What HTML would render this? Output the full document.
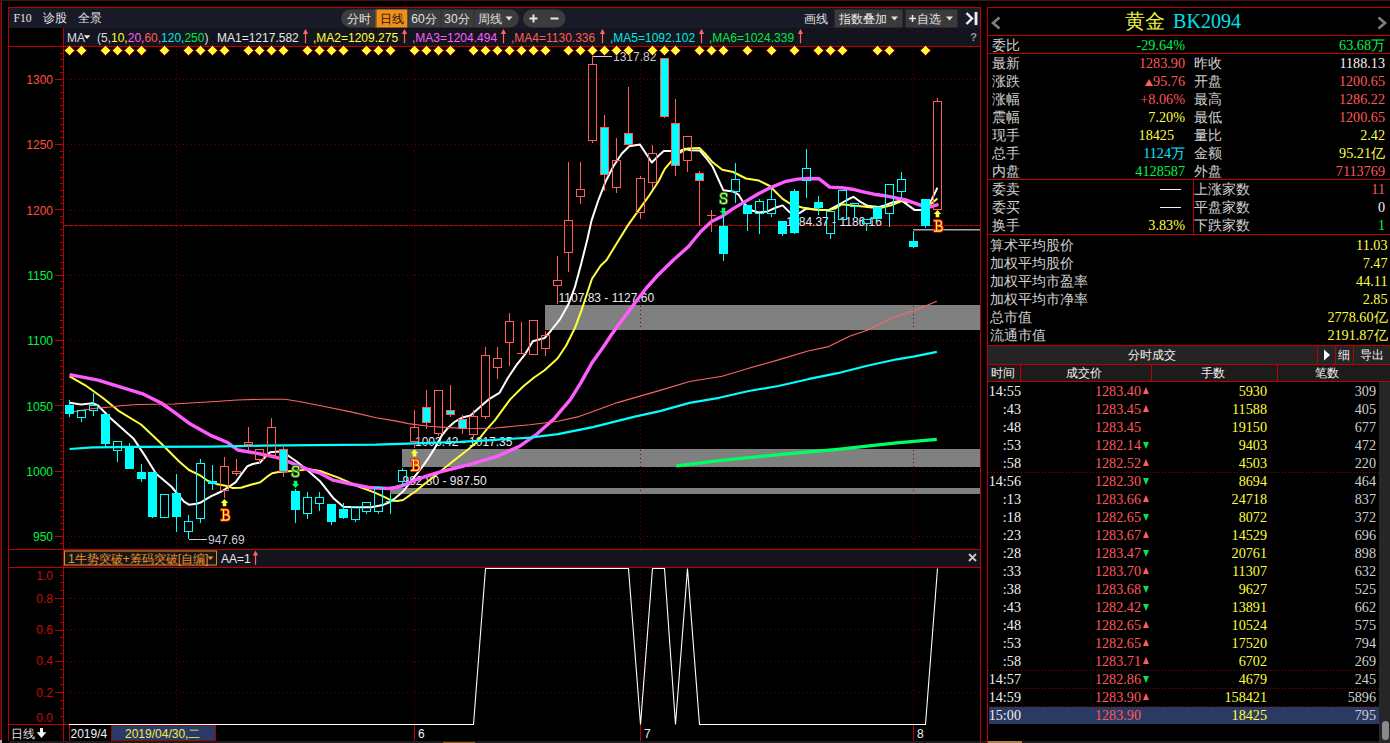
<!DOCTYPE html>
<html><head><meta charset="utf-8"><title>chart</title><style>
html,body{margin:0;padding:0;background:#000;}
body{width:1390px;height:743px;overflow:hidden;position:relative;font-family:"Liberation Sans",sans-serif;}
#rp{position:absolute;left:0;top:0;width:1390px;height:743px;}
#rp .l{position:absolute;background:#c00000;display:block}
.ttl{position:absolute;left:988px;width:402px;height:27px;line-height:27px;text-align:center;font-family:"Liberation Serif",serif;font-size:20px;white-space:pre}
.r{position:absolute;left:0;width:1390px;height:18px;line-height:18px;white-space:nowrap}
.r .k{position:absolute;top:0;font-size:14px;color:#d0d0d0;font-family:"Liberation Sans",sans-serif}
.r .v{position:absolute;top:0;font-family:"Liberation Serif",serif;font-size:14.2px}
.cj{font-family:"Liberation Sans",sans-serif;font-size:14px}
.tu{display:inline-block;width:0;height:0;border-left:3.8px solid transparent;border-right:3.8px solid transparent;border-bottom:7.5px solid #ff5c5c;margin-right:0.5px}
.td{display:inline-block;width:0;height:0;border-left:3.8px solid transparent;border-right:3.8px solid transparent;border-top:7.5px solid #00e64c}
.ds{display:inline-block;width:21px;height:1.5px;background:#f0f0f0;vertical-align:middle;margin-right:4px;margin-bottom:2px}
.hd{position:absolute;left:988px;width:402px;background:#242424}
.ht{position:absolute;font-size:12px;line-height:16px;color:#f0f0f0;white-space:nowrap}
</style></head><body>
<svg id="chart" width="1390" height="743" viewBox="0 0 1390 743" style="position:absolute;left:0;top:0" font-family="Liberation Sans, sans-serif">
<rect x="0" y="0" width="1390" height="1" fill="#481212"/>
<rect x="0" y="2" width="1" height="741" fill="#1a2222"/>
<rect x="1" y="1" width="1" height="742" fill="#c00000"/>
<rect x="9" y="8" width="971" height="20" fill="#181a28"/>
<rect x="64" y="28" width="916" height="18" fill="#14151c"/>
<rect x="64" y="550" width="916" height="17" fill="#14151c"/>
<g shape-rendering="crispEdges">
<rect x="545" y="305" width="435" height="25" fill="#808080"/>
<rect x="402" y="449" width="578" height="18" fill="#808080"/>
<rect x="390" y="488" width="590" height="6" fill="#808080"/>
<rect x="913" y="229" width="67" height="1" fill="#a8a8a8"/><rect x="913" y="230" width="67" height="1" fill="#585858"/>
<line x1="67" y1="79.5" x2="980" y2="79.5" stroke="#700000" stroke-width="1" stroke-dasharray="1 3"/>
<line x1="67" y1="144.5" x2="980" y2="144.5" stroke="#700000" stroke-width="1" stroke-dasharray="1 3"/>
<line x1="67" y1="210.5" x2="980" y2="210.5" stroke="#700000" stroke-width="1" stroke-dasharray="1 3"/>
<line x1="67" y1="275.5" x2="980" y2="275.5" stroke="#700000" stroke-width="1" stroke-dasharray="1 3"/>
<line x1="67" y1="340.5" x2="980" y2="340.5" stroke="#700000" stroke-width="1" stroke-dasharray="1 3"/>
<line x1="67" y1="406.5" x2="980" y2="406.5" stroke="#700000" stroke-width="1" stroke-dasharray="1 3"/>
<line x1="67" y1="471.5" x2="980" y2="471.5" stroke="#700000" stroke-width="1" stroke-dasharray="1 3"/>
<line x1="67" y1="536.5" x2="980" y2="536.5" stroke="#700000" stroke-width="1" stroke-dasharray="1 3"/>
<line x1="67" y1="598.5" x2="980" y2="598.5" stroke="#700000" stroke-width="1" stroke-dasharray="1 3"/>
<line x1="67" y1="629.5" x2="980" y2="629.5" stroke="#700000" stroke-width="1" stroke-dasharray="1 3"/>
<line x1="67" y1="661.5" x2="980" y2="661.5" stroke="#700000" stroke-width="1" stroke-dasharray="1 3"/>
<line x1="67" y1="692.5" x2="980" y2="692.5" stroke="#700000" stroke-width="1" stroke-dasharray="1 3"/>
<line x1="69.5" y1="46" x2="69.5" y2="549" stroke="#700000" stroke-width="1" stroke-dasharray="1 3" stroke-dashoffset="0"/>
<line x1="69.5" y1="570" x2="69.5" y2="724" stroke="#700000" stroke-width="1" stroke-dasharray="1 3"/>
<line x1="176.5" y1="46" x2="176.5" y2="549" stroke="#700000" stroke-width="1" stroke-dasharray="1 3" stroke-dashoffset="0"/>
<line x1="176.5" y1="570" x2="176.5" y2="724" stroke="#700000" stroke-width="1" stroke-dasharray="1 3"/>
<line x1="414.5" y1="46" x2="414.5" y2="549" stroke="#700000" stroke-width="1" stroke-dasharray="1 3" stroke-dashoffset="0"/>
<line x1="414.5" y1="570" x2="414.5" y2="724" stroke="#700000" stroke-width="1" stroke-dasharray="1 3"/>
<line x1="640.5" y1="46" x2="640.5" y2="549" stroke="#700000" stroke-width="1" stroke-dasharray="1 3" stroke-dashoffset="0"/>
<line x1="640.5" y1="570" x2="640.5" y2="724" stroke="#700000" stroke-width="1" stroke-dasharray="1 3"/>
<line x1="913.5" y1="46" x2="913.5" y2="549" stroke="#700000" stroke-width="1" stroke-dasharray="1 3" stroke-dashoffset="0"/>
<line x1="913.5" y1="570" x2="913.5" y2="724" stroke="#700000" stroke-width="1" stroke-dasharray="1 3"/>
<line x1="64" y1="225.5" x2="980" y2="225.5" stroke="#d00000" stroke-width="1" stroke-dasharray="4 1"/>
<rect x="8" y="7" width="973" height="1" fill="#c00000"/>
<rect x="8" y="7" width="1" height="734" fill="#c00000"/>
<rect x="980" y="7" width="1" height="736" fill="#c00000"/>
<rect x="8" y="46" width="973" height="1" fill="#c00000"/>
<rect x="8" y="549" width="973" height="1" fill="#c00000"/>
<rect x="8" y="567" width="973" height="1" fill="#c00000"/>
<rect x="8" y="724" width="62" height="1" fill="#c00000"/>
<rect x="63" y="28" width="1" height="713" fill="#c00000"/>
<rect x="60" y="53" width="3" height="1" fill="#c00000"/>
<rect x="60" y="59" width="3" height="1" fill="#c00000"/>
<rect x="60" y="66" width="3" height="1" fill="#c00000"/>
<rect x="60" y="72" width="3" height="1" fill="#c00000"/>
<rect x="55" y="79" width="8" height="1" fill="#c00000"/>
<rect x="60" y="85" width="3" height="1" fill="#c00000"/>
<rect x="60" y="92" width="3" height="1" fill="#c00000"/>
<rect x="60" y="98" width="3" height="1" fill="#c00000"/>
<rect x="60" y="105" width="3" height="1" fill="#c00000"/>
<rect x="60" y="111" width="3" height="1" fill="#c00000"/>
<rect x="60" y="118" width="3" height="1" fill="#c00000"/>
<rect x="60" y="124" width="3" height="1" fill="#c00000"/>
<rect x="60" y="131" width="3" height="1" fill="#c00000"/>
<rect x="60" y="137" width="3" height="1" fill="#c00000"/>
<rect x="55" y="144" width="8" height="1" fill="#c00000"/>
<rect x="60" y="151" width="3" height="1" fill="#c00000"/>
<rect x="60" y="157" width="3" height="1" fill="#c00000"/>
<rect x="60" y="164" width="3" height="1" fill="#c00000"/>
<rect x="60" y="170" width="3" height="1" fill="#c00000"/>
<rect x="60" y="177" width="3" height="1" fill="#c00000"/>
<rect x="60" y="183" width="3" height="1" fill="#c00000"/>
<rect x="60" y="190" width="3" height="1" fill="#c00000"/>
<rect x="60" y="196" width="3" height="1" fill="#c00000"/>
<rect x="60" y="203" width="3" height="1" fill="#c00000"/>
<rect x="55" y="209" width="8" height="1" fill="#c00000"/>
<rect x="60" y="216" width="3" height="1" fill="#c00000"/>
<rect x="60" y="222" width="3" height="1" fill="#c00000"/>
<rect x="60" y="229" width="3" height="1" fill="#c00000"/>
<rect x="60" y="235" width="3" height="1" fill="#c00000"/>
<rect x="60" y="242" width="3" height="1" fill="#c00000"/>
<rect x="60" y="249" width="3" height="1" fill="#c00000"/>
<rect x="60" y="255" width="3" height="1" fill="#c00000"/>
<rect x="60" y="262" width="3" height="1" fill="#c00000"/>
<rect x="60" y="268" width="3" height="1" fill="#c00000"/>
<rect x="55" y="275" width="8" height="1" fill="#c00000"/>
<rect x="60" y="281" width="3" height="1" fill="#c00000"/>
<rect x="60" y="288" width="3" height="1" fill="#c00000"/>
<rect x="60" y="294" width="3" height="1" fill="#c00000"/>
<rect x="60" y="301" width="3" height="1" fill="#c00000"/>
<rect x="60" y="307" width="3" height="1" fill="#c00000"/>
<rect x="60" y="314" width="3" height="1" fill="#c00000"/>
<rect x="60" y="320" width="3" height="1" fill="#c00000"/>
<rect x="60" y="327" width="3" height="1" fill="#c00000"/>
<rect x="60" y="333" width="3" height="1" fill="#c00000"/>
<rect x="55" y="340" width="8" height="1" fill="#c00000"/>
<rect x="60" y="347" width="3" height="1" fill="#c00000"/>
<rect x="60" y="353" width="3" height="1" fill="#c00000"/>
<rect x="60" y="360" width="3" height="1" fill="#c00000"/>
<rect x="60" y="366" width="3" height="1" fill="#c00000"/>
<rect x="60" y="373" width="3" height="1" fill="#c00000"/>
<rect x="60" y="379" width="3" height="1" fill="#c00000"/>
<rect x="60" y="386" width="3" height="1" fill="#c00000"/>
<rect x="60" y="392" width="3" height="1" fill="#c00000"/>
<rect x="60" y="399" width="3" height="1" fill="#c00000"/>
<rect x="55" y="405" width="8" height="1" fill="#c00000"/>
<rect x="60" y="412" width="3" height="1" fill="#c00000"/>
<rect x="60" y="418" width="3" height="1" fill="#c00000"/>
<rect x="60" y="425" width="3" height="1" fill="#c00000"/>
<rect x="60" y="431" width="3" height="1" fill="#c00000"/>
<rect x="60" y="438" width="3" height="1" fill="#c00000"/>
<rect x="60" y="445" width="3" height="1" fill="#c00000"/>
<rect x="60" y="451" width="3" height="1" fill="#c00000"/>
<rect x="60" y="458" width="3" height="1" fill="#c00000"/>
<rect x="60" y="464" width="3" height="1" fill="#c00000"/>
<rect x="55" y="471" width="8" height="1" fill="#c00000"/>
<rect x="60" y="477" width="3" height="1" fill="#c00000"/>
<rect x="60" y="484" width="3" height="1" fill="#c00000"/>
<rect x="60" y="490" width="3" height="1" fill="#c00000"/>
<rect x="60" y="497" width="3" height="1" fill="#c00000"/>
<rect x="60" y="503" width="3" height="1" fill="#c00000"/>
<rect x="60" y="510" width="3" height="1" fill="#c00000"/>
<rect x="60" y="516" width="3" height="1" fill="#c00000"/>
<rect x="60" y="523" width="3" height="1" fill="#c00000"/>
<rect x="60" y="529" width="3" height="1" fill="#c00000"/>
<rect x="55" y="536" width="8" height="1" fill="#c00000"/>
<rect x="60" y="543" width="3" height="1" fill="#c00000"/>
<rect x="60" y="716" width="3" height="1" fill="#c00000"/>
<rect x="60" y="708" width="3" height="1" fill="#c00000"/>
<rect x="60" y="700" width="3" height="1" fill="#c00000"/>
<rect x="55" y="692" width="8" height="1" fill="#c00000"/>
<rect x="60" y="684" width="3" height="1" fill="#c00000"/>
<rect x="60" y="677" width="3" height="1" fill="#c00000"/>
<rect x="60" y="669" width="3" height="1" fill="#c00000"/>
<rect x="55" y="661" width="8" height="1" fill="#c00000"/>
<rect x="60" y="653" width="3" height="1" fill="#c00000"/>
<rect x="60" y="645" width="3" height="1" fill="#c00000"/>
<rect x="60" y="637" width="3" height="1" fill="#c00000"/>
<rect x="55" y="630" width="8" height="1" fill="#c00000"/>
<rect x="60" y="622" width="3" height="1" fill="#c00000"/>
<rect x="60" y="614" width="3" height="1" fill="#c00000"/>
<rect x="60" y="606" width="3" height="1" fill="#c00000"/>
<rect x="55" y="598" width="8" height="1" fill="#c00000"/>
<rect x="60" y="590" width="3" height="1" fill="#c00000"/>
<rect x="60" y="582" width="3" height="1" fill="#c00000"/>
<rect x="60" y="575" width="3" height="1" fill="#c00000"/>
<rect x="69" y="724" width="1" height="17" fill="#c00000"/>
<rect x="414" y="724" width="1" height="17" fill="#c00000"/>
<rect x="640" y="724" width="1" height="17" fill="#c00000"/>
<rect x="913" y="724" width="1" height="17" fill="#c00000"/>
</g>
<text x="53" y="83.8" font-size="12" fill="#ff5040" text-anchor="end">1300</text>
<text x="53" y="148.8" font-size="12" fill="#ff5040" text-anchor="end">1250</text>
<text x="53" y="214.8" font-size="12" fill="#ff5040" text-anchor="end">1200</text>
<text x="53" y="279.8" font-size="12" fill="#00f448" text-anchor="end">1150</text>
<text x="53" y="344.8" font-size="12" fill="#00f448" text-anchor="end">1100</text>
<text x="53" y="410.8" font-size="12" fill="#00f448" text-anchor="end">1050</text>
<text x="53" y="475.8" font-size="12" fill="#00f448" text-anchor="end">1000</text>
<text x="53" y="540.8" font-size="12" fill="#00f448" text-anchor="end">950</text>
<text x="53" y="579.8" font-size="12" fill="#c01010" text-anchor="end">1.0</text>
<text x="53" y="602.8" font-size="12" fill="#c01010" text-anchor="end">0.8</text>
<text x="53" y="633.8" font-size="12" fill="#c01010" text-anchor="end">0.6</text>
<text x="53" y="665.3" font-size="12" fill="#c01010" text-anchor="end">0.4</text>
<text x="53" y="696.8" font-size="12" fill="#c01010" text-anchor="end">0.2</text>
<text x="53" y="721.8" font-size="12" fill="#c01010" text-anchor="end">0.0</text>
<text x="558.5" y="302" font-size="12" fill="#e8e8f4">1107.83 - 1127.60</text>
<text x="415" y="445.8" font-size="12" fill="#e8e8f4">1003.42 - 1017.35</text>
<text x="402.5" y="484.8" font-size="12" fill="#e8e8f4">982.80 - 987.50</text>
<text x="786.3" y="225.8" font-size="12" fill="#e8e8f4">1184.37 - 1186.16</text>
<polyline points="69.6,402.8 81.0,404.5 92.9,403.2 98.0,405.5 110.6,418.2 133.4,438.4 146.0,457.4 156.1,473.8 171.3,486.5 184.0,501.7 189.0,504.7 196.6,503.7 200.0,502.8 210.8,496.3 221.5,491.5 229.1,486.6 235.5,482.3 240.9,474.8 247.4,466.2 252.8,464.0 260.3,462.4 264.6,457.5 270.0,452.2 278.6,451.6 286.2,454.3 297.0,461.8 307.7,470.5 320.0,481.2 333.2,497.9 343.3,506.7 356.0,507.2 371.2,507.2 383.8,504.7 390.0,502.0 395.0,498.3 403.1,491.5 412.5,479.4 421.9,467.3 428.6,457.9 435.4,447.1 442.1,435.0 448.8,426.9 454.2,422.2 462.3,417.5 470.4,415.5 475.8,410.8 482.5,404.7 488.6,399.4 499.4,392.9 508.0,377.8 516.6,364.9 525.2,354.1 532.8,341.2 544.6,338.0 551.1,330.5 559.7,319.7 568.3,304.6 574.8,287.4 581.2,263.7 587.2,240.0 591.5,220.6 598.0,201.2 605.5,181.8 613.1,166.8 621.7,153.8 629.2,146.3 640.0,144.6 645.4,152.8 651.8,162.5 658.3,156.0 663.7,151.0 679.8,151.0 685.2,148.8 690.0,150.3 699.7,150.5 706.2,158.0 712.6,166.6 718.0,178.5 723.4,190.3 733.1,191.4 738.5,194.6 743.8,203.2 752.5,210.8 758.9,212.5 767.5,211.4 776.2,207.5 782.6,205.4 789.1,211.8 793.4,214.0 799.8,212.9 806.3,208.6 819.2,210.1 828.6,210.1 839.4,204.3 846.9,200.0 853.4,196.8 860.9,202.2 867.4,205.8 878.2,207.1 884.6,205.4 893.2,202.2 901.8,200.6 908.3,205.4 914.8,210.1 925.5,210.1 932.0,198.9 937.4,187.7" fill="none" stroke="#ffffff" stroke-width="2" stroke-linejoin="round" />
<polyline points="69.6,376.4 85.3,385.3 103.0,398.0 118.2,410.6 141.0,424.5 161.2,443.5 178.9,461.2 189.0,470.0 200.0,475.3 207.5,480.7 216.2,483.9 226.9,486.1 232.3,487.9 240.9,487.7 251.7,484.5 260.3,482.3 266.8,476.9 272.2,473.2 278.6,472.1 286.2,471.5 291.6,471.0 302.3,469.9 307.7,468.9 320.0,471.0 338.3,477.6 358.5,486.5 373.7,492.1 386.3,497.9 391.4,500.6 397.0,501.0 403.1,500.0 415.2,491.5 428.6,480.8 442.1,470.0 455.6,459.2 467.7,449.8 475.8,443.1 486.5,429.6 495.0,420.2 510.2,399.4 523.1,386.5 533.8,377.8 544.6,370.3 557.5,358.5 566.2,345.5 574.8,328.3 581.2,311.1 585.5,298.2 592.0,278.8 600.6,265.8 606.6,260.0 617.4,242.2 628.2,224.9 638.9,209.8 649.7,194.8 658.3,181.8 664.8,168.9 671.2,161.4 679.8,152.8 687.4,148.5 699.7,148.1 706.2,154.8 712.6,162.3 722.3,169.8 733.1,172.0 746.0,178.5 758.9,180.6 769.7,186.0 776.2,192.5 782.6,198.9 791.2,204.3 802.0,207.5 812.8,209.3 823.5,210.1 828.6,210.1 835.1,208.6 841.5,204.3 852.3,205.4 863.1,206.5 871.7,207.5 882.5,207.5 891.1,205.4 901.8,201.1 910.5,202.2 919.1,204.3 925.5,205.4 932.0,203.2 937.4,198.5" fill="none" stroke="#ffff3c" stroke-width="2" stroke-linejoin="round" />
<polyline points="69.6,374.7 98.0,380.2 123.2,387.8 143.5,394.2 161.2,403.0 173.8,411.9 189.0,423.2 211.8,435.9 227.0,442.2 237.7,450.0 256.0,453.2 275.4,457.0 286.2,460.8 297.0,465.1 307.7,469.4 320.0,473.2 333.2,480.2 350.9,484.0 371.2,487.8 388.9,488.5 395.0,487.5 403.0,485.5 415.2,480.1 428.6,475.4 442.1,471.3 455.6,468.0 469.0,464.6 482.5,460.6 495.0,457.2 519.4,446.4 536.9,434.1 554.4,418.4 570.5,399.4 581.2,382.1 592.0,362.8 602.8,347.7 611.4,334.8 620.0,322.9 634.8,303.0 646.0,288.5 657.6,275.5 673.4,260.0 688.5,246.5 700.8,231.5 711.5,221.5 722.3,216.2 733.1,208.6 746.0,201.1 758.9,193.5 771.8,187.1 784.8,181.7 797.7,179.1 808.5,178.5 819.2,178.8 829.7,187.1 841.5,187.7 852.3,189.2 863.1,191.8 873.8,194.2 884.6,195.7 895.4,197.8 906.2,200.0 914.8,203.2 925.5,207.1 932.0,206.5 938.5,204.3" fill="none" stroke="#ff5cff" stroke-width="3.4" stroke-linejoin="round" />
<polyline points="74.0,411.6 93.5,408.5 110.0,407.0 123.0,405.5 138.0,404.5 173.8,404.0 211.8,401.7 237.1,400.0 262.4,399.2 285.1,399.2 300.3,401.7 325.6,406.8 350.9,411.9 376.2,417.7 395.0,420.9 408.5,423.6 428.6,426.2 448.8,427.6 462.3,428.3 475.8,428.5 495.0,428.0 529.9,424.7 557.9,421.2 578.9,416.6 592.9,411.4 617.4,402.6 641.8,395.6 660.0,390.4 689.6,381.5 722.2,376.2 748.8,368.2 778.4,359.9 808.0,351.0 828.7,346.6 849.5,336.2 867.2,330.3 890.9,318.5 914.6,310.5 936.8,301.3" fill="none" stroke="#ff6464" stroke-width="1.1" stroke-linejoin="round" />
<polyline points="69.6,449.0 92.9,447.3 135.9,446.8 211.8,446.6 237.1,446.2 262.4,445.6 313.0,445.2 376.2,444.6 400.0,443.8 460.0,441.8 495.0,439.8 529.9,437.6 557.9,434.1 592.9,427.1 634.8,416.6 660.0,411.1 689.6,402.9 719.2,397.8 748.8,391.0 778.4,386.0 808.0,379.2 837.6,373.2 867.2,365.8 896.8,359.3 914.6,356.4 936.8,351.9" fill="none" stroke="#00ffff" stroke-width="2.2" stroke-linejoin="round" />
<polyline points="676.3,465.9 719.2,460.6 778.4,454.7 837.6,449.3 896.8,442.8 936.8,439.3" fill="none" stroke="#00ff64" stroke-width="3.2" stroke-linejoin="round" />
<g shape-rendering="crispEdges">
<rect x="69.0" y="400" width="1" height="17" fill="#00ffff"/>
<rect x="65.0" y="405" width="9" height="9" fill="#00ffff"/>
<rect x="81.0" y="418" width="1" height="4" fill="#00ffff"/>
<rect x="77.5" y="410.5" width="8" height="7" fill="none" stroke="#00ffff" stroke-width="1"/>
<rect x="93.0" y="393" width="1" height="12" fill="#00ffff"/>
<rect x="93.0" y="411" width="1" height="5" fill="#00ffff"/>
<rect x="89.5" y="405.5" width="8" height="5" fill="none" stroke="#00ffff" stroke-width="1"/>
<rect x="105.0" y="414" width="1" height="32" fill="#00ffff"/>
<rect x="101.0" y="414" width="9" height="30" fill="#00ffff"/>
<rect x="117.0" y="451" width="1" height="11" fill="#00ffff"/>
<rect x="113.5" y="441.5" width="8" height="9" fill="none" stroke="#00ffff" stroke-width="1"/>
<rect x="129.0" y="443" width="1" height="26" fill="#00ffff"/>
<rect x="125.0" y="446" width="9" height="23" fill="#00ffff"/>
<rect x="141.0" y="464" width="1" height="18" fill="#00ffff"/>
<rect x="137.0" y="472" width="9" height="7" fill="#00ffff"/>
<rect x="152.0" y="472" width="1" height="46" fill="#00ffff"/>
<rect x="148.0" y="472" width="9" height="45" fill="#00ffff"/>
<rect x="160.5" y="494.5" width="8" height="23" fill="none" stroke="#00ffff" stroke-width="1"/>
<rect x="176.0" y="474" width="1" height="58" fill="#00ffff"/>
<rect x="172.0" y="493" width="9" height="24" fill="#00ffff"/>
<rect x="188.0" y="515" width="1" height="6" fill="#00ffff"/>
<rect x="188.0" y="532" width="1" height="7" fill="#00ffff"/>
<rect x="184.5" y="521.5" width="8" height="10" fill="none" stroke="#00ffff" stroke-width="1"/>
<rect x="200.0" y="459" width="1" height="4" fill="#00ffff"/>
<rect x="200.0" y="519" width="1" height="4" fill="#00ffff"/>
<rect x="196.5" y="463.5" width="8" height="55" fill="none" stroke="#00ffff" stroke-width="1"/>
<rect x="212.0" y="465" width="1" height="25" fill="#00ffff"/>
<rect x="208.0" y="481" width="9" height="3" fill="#00ffff"/>
<rect x="224.0" y="457" width="1" height="9" fill="#ff5c5c"/>
<rect x="224.0" y="491" width="1" height="7" fill="#ff5c5c"/>
<rect x="220.5" y="466.5" width="8" height="24" fill="none" stroke="#ff5c5c" stroke-width="1"/>
<rect x="236.0" y="459" width="1" height="12" fill="#ff5c5c"/>
<rect x="236.0" y="474" width="1" height="2" fill="#ff5c5c"/>
<rect x="232.5" y="471.5" width="8" height="2" fill="none" stroke="#ff5c5c" stroke-width="1"/>
<rect x="248.0" y="427" width="1" height="15" fill="#ff5c5c"/>
<rect x="248.0" y="445" width="1" height="6" fill="#ff5c5c"/>
<rect x="244.5" y="442.5" width="8" height="2" fill="none" stroke="#ff5c5c" stroke-width="1"/>
<rect x="259.0" y="460" width="1" height="4" fill="#ff5c5c"/>
<rect x="255.5" y="449.5" width="8" height="10" fill="none" stroke="#ff5c5c" stroke-width="1"/>
<rect x="271.0" y="418" width="1" height="9" fill="#ff5c5c"/>
<rect x="267.5" y="427.5" width="8" height="29" fill="none" stroke="#ff5c5c" stroke-width="1"/>
<rect x="283.0" y="447" width="1" height="30" fill="#ff5c5c"/>
<rect x="279.5" y="449.5" width="8" height="22" fill="#00ffff" stroke="#ff5c5c" stroke-width="1"/>
<rect x="295.0" y="489" width="1" height="34" fill="#00ffff"/>
<rect x="291.0" y="491" width="9" height="19" fill="#00ffff"/>
<rect x="307.0" y="492" width="1" height="5" fill="#00ffff"/>
<rect x="307.0" y="514" width="1" height="5" fill="#00ffff"/>
<rect x="303.5" y="497.5" width="8" height="16" fill="none" stroke="#00ffff" stroke-width="1"/>
<rect x="319.0" y="492" width="1" height="5" fill="#00ffff"/>
<rect x="319.0" y="504" width="1" height="7" fill="#00ffff"/>
<rect x="315.5" y="497.5" width="8" height="6" fill="none" stroke="#00ffff" stroke-width="1"/>
<rect x="331.0" y="504" width="1" height="21" fill="#00ffff"/>
<rect x="327.0" y="504" width="9" height="18" fill="#00ffff"/>
<rect x="343.0" y="503" width="1" height="16" fill="#00ffff"/>
<rect x="339.0" y="509" width="9" height="9" fill="#00ffff"/>
<rect x="355.0" y="520" width="1" height="2" fill="#00ffff"/>
<rect x="351.5" y="506.5" width="8" height="13" fill="none" stroke="#00ffff" stroke-width="1"/>
<rect x="366.0" y="512" width="1" height="2" fill="#00ffff"/>
<rect x="362.5" y="502.5" width="8" height="9" fill="none" stroke="#00ffff" stroke-width="1"/>
<rect x="378.0" y="486" width="1" height="1" fill="#00ffff"/>
<rect x="378.0" y="512" width="1" height="2" fill="#00ffff"/>
<rect x="374.5" y="487.5" width="8" height="24" fill="none" stroke="#00ffff" stroke-width="1"/>
<rect x="390.0" y="494" width="1" height="7" fill="#00ffff"/>
<rect x="390.0" y="502" width="1" height="12" fill="#00ffff"/>
<rect x="386.0" y="501" width="9" height="1" fill="#00ffff"/>
<rect x="402.0" y="468" width="1" height="2" fill="#00ffff"/>
<rect x="402.0" y="482" width="1" height="5" fill="#00ffff"/>
<rect x="398.5" y="470.5" width="8" height="11" fill="none" stroke="#00ffff" stroke-width="1"/>
<rect x="414.0" y="410" width="1" height="17" fill="#ff5c5c"/>
<rect x="414.0" y="442" width="1" height="6" fill="#ff5c5c"/>
<rect x="410.5" y="427.5" width="8" height="14" fill="none" stroke="#ff5c5c" stroke-width="1"/>
<rect x="426.0" y="390" width="1" height="39" fill="#ff5c5c"/>
<rect x="422.5" y="407.5" width="8" height="15" fill="#00ffff" stroke="#ff5c5c" stroke-width="1"/>
<rect x="438.0" y="434" width="1" height="2" fill="#ff5c5c"/>
<rect x="434.5" y="390.5" width="8" height="43" fill="none" stroke="#ff5c5c" stroke-width="1"/>
<rect x="450.0" y="385" width="1" height="32" fill="#ff5c5c"/>
<rect x="446.5" y="410.5" width="8" height="4" fill="#00ffff" stroke="#ff5c5c" stroke-width="1"/>
<rect x="462.0" y="415" width="1" height="19" fill="#ff5c5c"/>
<rect x="458.5" y="419.5" width="8" height="9" fill="#00ffff" stroke="#ff5c5c" stroke-width="1"/>
<rect x="473.0" y="410" width="1" height="6" fill="#ff5c5c"/>
<rect x="473.0" y="435" width="1" height="2" fill="#ff5c5c"/>
<rect x="469.5" y="416.5" width="8" height="18" fill="none" stroke="#ff5c5c" stroke-width="1"/>
<rect x="485.0" y="347" width="1" height="8" fill="#ff5c5c"/>
<rect x="485.0" y="417" width="1" height="2" fill="#ff5c5c"/>
<rect x="481.5" y="355.5" width="8" height="61" fill="none" stroke="#ff5c5c" stroke-width="1"/>
<rect x="497.0" y="347" width="1" height="11" fill="#ff5c5c"/>
<rect x="497.0" y="368" width="1" height="11" fill="#ff5c5c"/>
<rect x="493.5" y="358.5" width="8" height="9" fill="none" stroke="#ff5c5c" stroke-width="1"/>
<rect x="509.0" y="313" width="1" height="8" fill="#ff5c5c"/>
<rect x="509.0" y="343" width="1" height="23" fill="#ff5c5c"/>
<rect x="505.5" y="321.5" width="8" height="21" fill="none" stroke="#ff5c5c" stroke-width="1"/>
<rect x="521.0" y="322" width="1" height="31" fill="#ff5c5c"/>
<rect x="517.0" y="353" width="9" height="1" fill="#ff5c5c"/>
<rect x="529.5" y="320.5" width="8" height="34" fill="none" stroke="#ff5c5c" stroke-width="1"/>
<rect x="545.0" y="331" width="1" height="4" fill="#ff5c5c"/>
<rect x="545.0" y="349" width="1" height="7" fill="#ff5c5c"/>
<rect x="541.5" y="335.5" width="8" height="13" fill="none" stroke="#ff5c5c" stroke-width="1"/>
<rect x="557.0" y="256" width="1" height="24" fill="#ff5c5c"/>
<rect x="557.0" y="286" width="1" height="18" fill="#ff5c5c"/>
<rect x="553.5" y="280.5" width="8" height="5" fill="none" stroke="#ff5c5c" stroke-width="1"/>
<rect x="568.0" y="162" width="1" height="58" fill="#ff5c5c"/>
<rect x="568.0" y="253" width="1" height="19" fill="#ff5c5c"/>
<rect x="564.5" y="220.5" width="8" height="32" fill="none" stroke="#ff5c5c" stroke-width="1"/>
<rect x="580.0" y="162" width="1" height="27" fill="#ff5c5c"/>
<rect x="580.0" y="197" width="1" height="7" fill="#ff5c5c"/>
<rect x="576.5" y="189.5" width="8" height="7" fill="none" stroke="#ff5c5c" stroke-width="1"/>
<rect x="592.0" y="56" width="1" height="8" fill="#ff5c5c"/>
<rect x="592.0" y="141" width="1" height="2" fill="#ff5c5c"/>
<rect x="588.5" y="64.5" width="8" height="76" fill="none" stroke="#ff5c5c" stroke-width="1"/>
<rect x="604.0" y="115" width="1" height="76" fill="#ff5c5c"/>
<rect x="600.5" y="127.5" width="8" height="47" fill="#00ffff" stroke="#ff5c5c" stroke-width="1"/>
<rect x="616.0" y="138" width="1" height="22" fill="#ff5c5c"/>
<rect x="616.0" y="188" width="1" height="5" fill="#ff5c5c"/>
<rect x="612.5" y="160.5" width="8" height="27" fill="none" stroke="#ff5c5c" stroke-width="1"/>
<rect x="628.0" y="87" width="1" height="60" fill="#ff5c5c"/>
<rect x="624.5" y="133.5" width="8" height="11" fill="#00ffff" stroke="#ff5c5c" stroke-width="1"/>
<rect x="640.0" y="176" width="1" height="2" fill="#ff5c5c"/>
<rect x="640.0" y="213" width="1" height="6" fill="#ff5c5c"/>
<rect x="636.5" y="178.5" width="8" height="34" fill="none" stroke="#ff5c5c" stroke-width="1"/>
<rect x="652.0" y="145" width="1" height="8" fill="#ff5c5c"/>
<rect x="652.0" y="183" width="1" height="6" fill="#ff5c5c"/>
<rect x="648.5" y="153.5" width="8" height="29" fill="none" stroke="#ff5c5c" stroke-width="1"/>
<rect x="664.0" y="58" width="1" height="60" fill="#ff5c5c"/>
<rect x="660.5" y="58.5" width="8" height="58" fill="#00ffff" stroke="#ff5c5c" stroke-width="1"/>
<rect x="675.0" y="99" width="1" height="77" fill="#ff5c5c"/>
<rect x="671.5" y="123.5" width="8" height="42" fill="#00ffff" stroke="#ff5c5c" stroke-width="1"/>
<rect x="687.0" y="161" width="1" height="11" fill="#ff5c5c"/>
<rect x="683.5" y="136.5" width="8" height="24" fill="none" stroke="#ff5c5c" stroke-width="1"/>
<rect x="699.0" y="171" width="1" height="55" fill="#ff5c5c"/>
<rect x="695.5" y="173.5" width="8" height="7" fill="#00ffff" stroke="#ff5c5c" stroke-width="1"/>
<rect x="711.0" y="210" width="1" height="5" fill="#ff5c5c"/>
<rect x="711.0" y="216" width="1" height="16" fill="#ff5c5c"/>
<rect x="707.0" y="215" width="9" height="1" fill="#ff5c5c"/>
<rect x="723.0" y="215" width="1" height="46" fill="#00ffff"/>
<rect x="719.0" y="226" width="9" height="28" fill="#00ffff"/>
<rect x="735.0" y="163" width="1" height="16" fill="#00ffff"/>
<rect x="735.0" y="192" width="1" height="11" fill="#00ffff"/>
<rect x="731.5" y="179.5" width="8" height="12" fill="none" stroke="#00ffff" stroke-width="1"/>
<rect x="747.0" y="205" width="1" height="26" fill="#00ffff"/>
<rect x="743.0" y="205" width="9" height="9" fill="#00ffff"/>
<rect x="759.0" y="199" width="1" height="2" fill="#00ffff"/>
<rect x="759.0" y="214" width="1" height="20" fill="#00ffff"/>
<rect x="755.5" y="201.5" width="8" height="12" fill="none" stroke="#00ffff" stroke-width="1"/>
<rect x="771.0" y="188" width="1" height="11" fill="#00ffff"/>
<rect x="771.0" y="214" width="1" height="3" fill="#00ffff"/>
<rect x="767.5" y="199.5" width="8" height="14" fill="none" stroke="#00ffff" stroke-width="1"/>
<rect x="782.0" y="221" width="1" height="15" fill="#00ffff"/>
<rect x="778.0" y="221" width="9" height="13" fill="#00ffff"/>
<rect x="794.0" y="189" width="1" height="45" fill="#00ffff"/>
<rect x="790.0" y="191" width="9" height="42" fill="#00ffff"/>
<rect x="806.0" y="149" width="1" height="19" fill="#00ffff"/>
<rect x="806.0" y="181" width="1" height="17" fill="#00ffff"/>
<rect x="802.5" y="168.5" width="8" height="12" fill="none" stroke="#00ffff" stroke-width="1"/>
<rect x="818.0" y="196" width="1" height="19" fill="#00ffff"/>
<rect x="814.0" y="202" width="9" height="6" fill="#00ffff"/>
<rect x="830.0" y="234" width="1" height="5" fill="#00ffff"/>
<rect x="826.5" y="211.5" width="8" height="22" fill="none" stroke="#00ffff" stroke-width="1"/>
<rect x="838.5" y="190.5" width="8" height="29" fill="none" stroke="#00ffff" stroke-width="1"/>
<rect x="854.0" y="207" width="1" height="11" fill="#00ffff"/>
<rect x="850.5" y="203.5" width="8" height="3" fill="none" stroke="#00ffff" stroke-width="1"/>
<rect x="866.0" y="224" width="1" height="7" fill="#00ffff"/>
<rect x="862.5" y="219.5" width="8" height="4" fill="none" stroke="#00ffff" stroke-width="1"/>
<rect x="877.0" y="207" width="1" height="12" fill="#00ffff"/>
<rect x="873.0" y="207" width="9" height="12" fill="#00ffff"/>
<rect x="889.0" y="214" width="1" height="13" fill="#00ffff"/>
<rect x="885.5" y="184.5" width="8" height="29" fill="none" stroke="#00ffff" stroke-width="1"/>
<rect x="901.0" y="172" width="1" height="7" fill="#00ffff"/>
<rect x="901.0" y="192" width="1" height="6" fill="#00ffff"/>
<rect x="897.5" y="179.5" width="8" height="12" fill="none" stroke="#00ffff" stroke-width="1"/>
<rect x="913.0" y="231" width="1" height="17" fill="#00ffff"/>
<rect x="909.0" y="241" width="9" height="6" fill="#00ffff"/>
<rect x="925.0" y="199" width="1" height="29" fill="#00ffff"/>
<rect x="921.0" y="199" width="9" height="27" fill="#00ffff"/>
<rect x="937.0" y="98" width="1" height="3" fill="#ff5c5c"/>
<rect x="933.5" y="101.5" width="8" height="108" fill="none" stroke="#ff5c5c" stroke-width="1"/>
</g>
<path d="M592.5 56.5 H612" stroke="#d0d0d0" stroke-width="1" fill="none" shape-rendering="crispEdges"/>
<text x="613" y="61" font-size="12" fill="#c8c8d0">1317.82</text>
<path d="M188.5 539.5 H207" stroke="#d0d0d0" stroke-width="1" fill="none" shape-rendering="crispEdges"/>
<text x="208" y="544.3" font-size="12" fill="#c8c8d0">947.69</text>
<path d="M224.5 499.0 l3.7 4 h-1.9 v3.2 h-3.6 v-3.2 h-1.9 z" fill="#ffff38"/>
<g transform="translate(221.6 509.7)" fill="none" stroke-linecap="square"><path d="M0 0 H4.6 Q6.8 0 6.8 2.5 Q6.8 5 4.6 5 H1.9 M4.6 5 Q7.6 5 7.6 7.7 Q7.6 10.4 4.8 10.4 H0 M1.9 0 V10.4" stroke="#f01800" stroke-width="3"/><path d="M0 0 H4.6 Q6.8 0 6.8 2.5 Q6.8 5 4.6 5 H1.9 M4.6 5 Q7.6 5 7.6 7.7 Q7.6 10.4 4.8 10.4 H0 M1.9 0 V10.4" stroke="#ffff40" stroke-width="1.1"/></g>
<path d="M414.5 449.3 l3.7 4 h-1.9 v3.2 h-3.6 v-3.2 h-1.9 z" fill="#ffff38"/>
<g transform="translate(411.6 460.0)" fill="none" stroke-linecap="square"><path d="M0 0 H4.6 Q6.8 0 6.8 2.5 Q6.8 5 4.6 5 H1.9 M4.6 5 Q7.6 5 7.6 7.7 Q7.6 10.4 4.8 10.4 H0 M1.9 0 V10.4" stroke="#f01800" stroke-width="3"/><path d="M0 0 H4.6 Q6.8 0 6.8 2.5 Q6.8 5 4.6 5 H1.9 M4.6 5 Q7.6 5 7.6 7.7 Q7.6 10.4 4.8 10.4 H0 M1.9 0 V10.4" stroke="#ffff40" stroke-width="1.1"/></g>
<path d="M937.5 210.0 l3.7 4 h-1.9 v3.2 h-3.6 v-3.2 h-1.9 z" fill="#ffff38"/>
<g transform="translate(934.6 220.7)" fill="none" stroke-linecap="square"><path d="M0 0 H4.6 Q6.8 0 6.8 2.5 Q6.8 5 4.6 5 H1.9 M4.6 5 Q7.6 5 7.6 7.7 Q7.6 10.4 4.8 10.4 H0 M1.9 0 V10.4" stroke="#f01800" stroke-width="3"/><path d="M0 0 H4.6 Q6.8 0 6.8 2.5 Q6.8 5 4.6 5 H1.9 M4.6 5 Q7.6 5 7.6 7.7 Q7.6 10.4 4.8 10.4 H0 M1.9 0 V10.4" stroke="#ffff40" stroke-width="1.1"/></g>
<g transform="translate(292.3 466.3)" fill="none" stroke-linecap="square"><path d="M6.3 2.6 V0.9 Q5 0 3.4 0 Q0.4 0 0.4 2.6 Q0.4 4.4 3.3 5 Q6.4 5.7 6.4 7.6 Q6.4 10.2 3.2 10.2 Q1.4 10.2 0.1 9.2 V7.5" stroke="#0a7a3c" stroke-width="3"/><path d="M6.3 2.6 V0.9 Q5 0 3.4 0 Q0.4 0 0.4 2.6 Q0.4 4.4 3.3 5 Q6.4 5.7 6.4 7.6 Q6.4 10.2 3.2 10.2 Q1.4 10.2 0.1 9.2 V7.5" stroke="#f4f440" stroke-width="1.1"/></g>
<path d="M295.5 488.0 l-3.7 -4 h1.9 v-3.2 h3.6 v3.2 h1.9 z" fill="#00f860"/>
<g transform="translate(720.3 193.3)" fill="none" stroke-linecap="square"><path d="M6.3 2.6 V0.9 Q5 0 3.4 0 Q0.4 0 0.4 2.6 Q0.4 4.4 3.3 5 Q6.4 5.7 6.4 7.6 Q6.4 10.2 3.2 10.2 Q1.4 10.2 0.1 9.2 V7.5" stroke="#0a7a3c" stroke-width="3"/><path d="M6.3 2.6 V0.9 Q5 0 3.4 0 Q0.4 0 0.4 2.6 Q0.4 4.4 3.3 5 Q6.4 5.7 6.4 7.6 Q6.4 10.2 3.2 10.2 Q1.4 10.2 0.1 9.2 V7.5" stroke="#f4f440" stroke-width="1.1"/></g>
<path d="M723.5 215.0 l-3.7 -4 h1.9 v-3.2 h3.6 v3.2 h1.9 z" fill="#00f860"/>
<path d="M69.5 45.4 l5.1 5.1 l-5.1 5.1 l-5.1 -5.1 z" fill="#ffff38" stroke="#c80800" stroke-width="0.9"/>
<path d="M81.5 45.4 l5.1 5.1 l-5.1 5.1 l-5.1 -5.1 z" fill="#ffff38" stroke="#c80800" stroke-width="0.9"/>
<path d="M105.5 45.4 l5.1 5.1 l-5.1 5.1 l-5.1 -5.1 z" fill="#ffff38" stroke="#c80800" stroke-width="0.9"/>
<path d="M117.5 45.4 l5.1 5.1 l-5.1 5.1 l-5.1 -5.1 z" fill="#ffff38" stroke="#c80800" stroke-width="0.9"/>
<path d="M129.5 45.4 l5.1 5.1 l-5.1 5.1 l-5.1 -5.1 z" fill="#ffff38" stroke="#c80800" stroke-width="0.9"/>
<path d="M141.5 45.4 l5.1 5.1 l-5.1 5.1 l-5.1 -5.1 z" fill="#ffff38" stroke="#c80800" stroke-width="0.9"/>
<path d="M164.5 45.4 l5.1 5.1 l-5.1 5.1 l-5.1 -5.1 z" fill="#ffff38" stroke="#c80800" stroke-width="0.9"/>
<path d="M188.5 45.4 l5.1 5.1 l-5.1 5.1 l-5.1 -5.1 z" fill="#ffff38" stroke="#c80800" stroke-width="0.9"/>
<path d="M200.5 45.4 l5.1 5.1 l-5.1 5.1 l-5.1 -5.1 z" fill="#ffff38" stroke="#c80800" stroke-width="0.9"/>
<path d="M212.5 45.4 l5.1 5.1 l-5.1 5.1 l-5.1 -5.1 z" fill="#ffff38" stroke="#c80800" stroke-width="0.9"/>
<path d="M224.5 45.4 l5.1 5.1 l-5.1 5.1 l-5.1 -5.1 z" fill="#ffff38" stroke="#c80800" stroke-width="0.9"/>
<path d="M248.5 45.4 l5.1 5.1 l-5.1 5.1 l-5.1 -5.1 z" fill="#ffff38" stroke="#c80800" stroke-width="0.9"/>
<path d="M259.5 45.4 l5.1 5.1 l-5.1 5.1 l-5.1 -5.1 z" fill="#ffff38" stroke="#c80800" stroke-width="0.9"/>
<path d="M271.5 45.4 l5.1 5.1 l-5.1 5.1 l-5.1 -5.1 z" fill="#ffff38" stroke="#c80800" stroke-width="0.9"/>
<path d="M283.5 45.4 l5.1 5.1 l-5.1 5.1 l-5.1 -5.1 z" fill="#ffff38" stroke="#c80800" stroke-width="0.9"/>
<path d="M307.5 45.4 l5.1 5.1 l-5.1 5.1 l-5.1 -5.1 z" fill="#ffff38" stroke="#c80800" stroke-width="0.9"/>
<path d="M319.5 45.4 l5.1 5.1 l-5.1 5.1 l-5.1 -5.1 z" fill="#ffff38" stroke="#c80800" stroke-width="0.9"/>
<path d="M331.5 45.4 l5.1 5.1 l-5.1 5.1 l-5.1 -5.1 z" fill="#ffff38" stroke="#c80800" stroke-width="0.9"/>
<path d="M343.5 45.4 l5.1 5.1 l-5.1 5.1 l-5.1 -5.1 z" fill="#ffff38" stroke="#c80800" stroke-width="0.9"/>
<path d="M366.5 45.4 l5.1 5.1 l-5.1 5.1 l-5.1 -5.1 z" fill="#ffff38" stroke="#c80800" stroke-width="0.9"/>
<path d="M378.5 45.4 l5.1 5.1 l-5.1 5.1 l-5.1 -5.1 z" fill="#ffff38" stroke="#c80800" stroke-width="0.9"/>
<path d="M390.5 45.4 l5.1 5.1 l-5.1 5.1 l-5.1 -5.1 z" fill="#ffff38" stroke="#c80800" stroke-width="0.9"/>
<path d="M414.5 45.4 l5.1 5.1 l-5.1 5.1 l-5.1 -5.1 z" fill="#ffff38" stroke="#c80800" stroke-width="0.9"/>
<path d="M426.5 45.4 l5.1 5.1 l-5.1 5.1 l-5.1 -5.1 z" fill="#ffff38" stroke="#c80800" stroke-width="0.9"/>
<path d="M438.5 45.4 l5.1 5.1 l-5.1 5.1 l-5.1 -5.1 z" fill="#ffff38" stroke="#c80800" stroke-width="0.9"/>
<path d="M450.5 45.4 l5.1 5.1 l-5.1 5.1 l-5.1 -5.1 z" fill="#ffff38" stroke="#c80800" stroke-width="0.9"/>
<path d="M473.5 45.4 l5.1 5.1 l-5.1 5.1 l-5.1 -5.1 z" fill="#ffff38" stroke="#c80800" stroke-width="0.9"/>
<path d="M485.5 45.4 l5.1 5.1 l-5.1 5.1 l-5.1 -5.1 z" fill="#ffff38" stroke="#c80800" stroke-width="0.9"/>
<path d="M497.5 45.4 l5.1 5.1 l-5.1 5.1 l-5.1 -5.1 z" fill="#ffff38" stroke="#c80800" stroke-width="0.9"/>
<path d="M509.5 45.4 l5.1 5.1 l-5.1 5.1 l-5.1 -5.1 z" fill="#ffff38" stroke="#c80800" stroke-width="0.9"/>
<path d="M521.5 45.4 l5.1 5.1 l-5.1 5.1 l-5.1 -5.1 z" fill="#ffff38" stroke="#c80800" stroke-width="0.9"/>
<path d="M533.5 45.4 l5.1 5.1 l-5.1 5.1 l-5.1 -5.1 z" fill="#ffff38" stroke="#c80800" stroke-width="0.9"/>
<path d="M545.5 45.4 l5.1 5.1 l-5.1 5.1 l-5.1 -5.1 z" fill="#ffff38" stroke="#c80800" stroke-width="0.9"/>
<path d="M568.5 45.4 l5.1 5.1 l-5.1 5.1 l-5.1 -5.1 z" fill="#ffff38" stroke="#c80800" stroke-width="0.9"/>
<path d="M580.5 45.4 l5.1 5.1 l-5.1 5.1 l-5.1 -5.1 z" fill="#ffff38" stroke="#c80800" stroke-width="0.9"/>
<path d="M592.5 45.4 l5.1 5.1 l-5.1 5.1 l-5.1 -5.1 z" fill="#ffff38" stroke="#c80800" stroke-width="0.9"/>
<path d="M604.5 45.4 l5.1 5.1 l-5.1 5.1 l-5.1 -5.1 z" fill="#ffff38" stroke="#c80800" stroke-width="0.9"/>
<path d="M616.5 45.4 l5.1 5.1 l-5.1 5.1 l-5.1 -5.1 z" fill="#ffff38" stroke="#c80800" stroke-width="0.9"/>
<path d="M628.5 45.4 l5.1 5.1 l-5.1 5.1 l-5.1 -5.1 z" fill="#ffff38" stroke="#c80800" stroke-width="0.9"/>
<path d="M652.5 45.4 l5.1 5.1 l-5.1 5.1 l-5.1 -5.1 z" fill="#ffff38" stroke="#c80800" stroke-width="0.9"/>
<path d="M664.5 45.4 l5.1 5.1 l-5.1 5.1 l-5.1 -5.1 z" fill="#ffff38" stroke="#c80800" stroke-width="0.9"/>
<path d="M675.5 45.4 l5.1 5.1 l-5.1 5.1 l-5.1 -5.1 z" fill="#ffff38" stroke="#c80800" stroke-width="0.9"/>
<path d="M699.5 45.4 l5.1 5.1 l-5.1 5.1 l-5.1 -5.1 z" fill="#ffff38" stroke="#c80800" stroke-width="0.9"/>
<path d="M711.5 45.4 l5.1 5.1 l-5.1 5.1 l-5.1 -5.1 z" fill="#ffff38" stroke="#c80800" stroke-width="0.9"/>
<path d="M723.5 45.4 l5.1 5.1 l-5.1 5.1 l-5.1 -5.1 z" fill="#ffff38" stroke="#c80800" stroke-width="0.9"/>
<path d="M747.5 45.4 l5.1 5.1 l-5.1 5.1 l-5.1 -5.1 z" fill="#ffff38" stroke="#c80800" stroke-width="0.9"/>
<path d="M771.5 45.4 l5.1 5.1 l-5.1 5.1 l-5.1 -5.1 z" fill="#ffff38" stroke="#c80800" stroke-width="0.9"/>
<path d="M794.5 45.4 l5.1 5.1 l-5.1 5.1 l-5.1 -5.1 z" fill="#ffff38" stroke="#c80800" stroke-width="0.9"/>
<path d="M818.5 45.4 l5.1 5.1 l-5.1 5.1 l-5.1 -5.1 z" fill="#ffff38" stroke="#c80800" stroke-width="0.9"/>
<path d="M830.5 45.4 l5.1 5.1 l-5.1 5.1 l-5.1 -5.1 z" fill="#ffff38" stroke="#c80800" stroke-width="0.9"/>
<path d="M842.5 45.4 l5.1 5.1 l-5.1 5.1 l-5.1 -5.1 z" fill="#ffff38" stroke="#c80800" stroke-width="0.9"/>
<path d="M877.5 45.4 l5.1 5.1 l-5.1 5.1 l-5.1 -5.1 z" fill="#ffff38" stroke="#c80800" stroke-width="0.9"/>
<path d="M889.5 45.4 l5.1 5.1 l-5.1 5.1 l-5.1 -5.1 z" fill="#ffff38" stroke="#c80800" stroke-width="0.9"/>
<path d="M925.5 45.4 l5.1 5.1 l-5.1 5.1 l-5.1 -5.1 z" fill="#ffff38" stroke="#c80800" stroke-width="0.9"/>
<polyline points="69.5,724.5 473.5,724.5 485.5,568.5 628.5,568.5 640.5,724.5 652.5,568.5 664.5,568.5 675.5,724.5 687.5,568.5 699.5,724.5 925.5,724.5 937.5,568.5" fill="none" stroke="#ffffff" stroke-width="1.1"/>
<g shape-rendering="crispEdges">
<rect x="69" y="724" width="404" height="1" fill="#fff"/>
<rect x="699" y="724" width="226" height="1" fill="#fff"/>
<rect x="485" y="568" width="144" height="1" fill="#fff"/>
<rect x="652" y="568" width="13" height="1" fill="#fff"/>
</g>
<text x="13.5" y="22.2" font-family="Liberation Serif, serif" font-size="11.6" fill="#e6e6e6">F10</text>
<text x="43" y="22.2" font-size="12" fill="#e6e6e6">诊股</text>
<text x="78" y="22.2" font-size="12" fill="#e6e6e6">全景</text>
<rect x="341" y="9.5" width="178" height="18" rx="9" fill="#3c3c3c"/>
<rect x="375.5" y="9.5" width="32" height="18" fill="#f0901c"/>
<rect x="375.5" y="9.5" width="1" height="18" fill="#2a2a2a" opacity=".8"/>
<rect x="407.5" y="9.5" width="1" height="18" fill="#2a2a2a" opacity=".8"/>
<rect x="440.5" y="9.5" width="1" height="18" fill="#2a2a2a" opacity=".8"/>
<rect x="473.5" y="9.5" width="1" height="18" fill="#2a2a2a" opacity=".8"/>
<text x="358.5" y="22.8" font-size="12" fill="#e0e0e0" text-anchor="middle">分时</text>
<text x="391.5" y="22.8" font-size="12" fill="#1c1208" text-anchor="middle">日线</text>
<text x="424.0" y="22.8" font-size="12" fill="#e0e0e0" text-anchor="middle">60分</text>
<text x="457.0" y="22.8" font-size="12" fill="#e0e0e0" text-anchor="middle">30分</text>
<text x="489.5" y="22.8" font-size="12" fill="#e0e0e0" text-anchor="middle">周线</text>
<path d="M505.5 16.5 h7 l-3.5 4 z" fill="#e0e0e0"/>
<rect x="523" y="9.5" width="42.5" height="18" rx="9" fill="#3c3c3c"/>
<path d="M529.5 18.5 h8 M533.5 14.5 v8 M550.5 18.5 h8" stroke="#e8e8e8" stroke-width="2" fill="none"/>
<text x="803.5" y="22.8" font-size="12" fill="#e6e6e6">画线</text>
<rect x="834.5" y="9.5" width="68" height="18" fill="#3a3a3a"/>
<text x="839" y="22.8" font-size="12" fill="#e6e6e6">指数叠加</text>
<path d="M891 16.5 h7 l-3.5 4 z" fill="#e0e0e0"/>
<rect x="905.5" y="9.5" width="52" height="18" fill="#3a3a3a"/>
<path d="M909 18.5 h7 M912.5 15 v7" stroke="#e8e8e8" stroke-width="1.6"/><text x="917" y="22.8" font-size="12" fill="#e6e6e6">自选</text>
<path d="M946 16.5 h7 l-3.5 4 z" fill="#e0e0e0"/>
<path d="M966.5 13 l5.5 5.5 l-5.5 5.5" stroke="#f0f0f0" stroke-width="2.4" fill="none"/><rect x="974.6" y="12" width="2.8" height="13" fill="#f0f0f0"/>
<text x="970.3" y="41.3" font-size="11" font-weight="bold" fill="#989898">?</text>
<text x="67" y="41.5" font-size="12" fill="#d8d8e8">MA</text><path d="M83.8 35.3 h6.6 l-3.3 3.8 z" fill="#e8e8e8"/>
<text x="97" y="41.5" font-size="12"><tspan fill="#d8d8e8">(5,</tspan><tspan fill="#ffff3c">10,</tspan><tspan fill="#ff5cff">20,</tspan><tspan fill="#ff5c5c">60,</tspan><tspan fill="#00e6e6">120,</tspan><tspan fill="#00e64c">250</tspan><tspan fill="#d8d8e8">)</tspan></text>
<text x="217" y="41.5" font-size="12" fill="#e8e8f0">MA1=1217.582</text>
<path d="M305.5 43.2 v-13" stroke="#ff6464" stroke-width="1.2" fill="none"/><path d="M302.9 34.0 l2.6 -5 l2.6 5 z" fill="#ff6464"/>
<text x="313" y="41.5" font-size="12" fill="#ffff3c">,MA2=1209.275</text>
<path d="M404.5 43.2 v-13" stroke="#ff6464" stroke-width="1.2" fill="none"/><path d="M401.9 34.0 l2.6 -5 l2.6 5 z" fill="#ff6464"/>
<text x="412" y="41.5" font-size="12" fill="#ff5cff">,MA3=1204.494</text>
<path d="M503.5 43.2 v-13" stroke="#ff6464" stroke-width="1.2" fill="none"/><path d="M500.9 34.0 l2.6 -5 l2.6 5 z" fill="#ff6464"/>
<text x="511" y="41.5" font-size="12" fill="#ff5c5c">,MA4=1130.336</text>
<path d="M602.5 43.2 v-13" stroke="#ff6464" stroke-width="1.2" fill="none"/><path d="M599.9 34.0 l2.6 -5 l2.6 5 z" fill="#ff6464"/>
<text x="610" y="41.5" font-size="12" fill="#00e6e6">,MA5=1092.102</text>
<path d="M701.5 43.2 v-13" stroke="#ff6464" stroke-width="1.2" fill="none"/><path d="M698.9 34.0 l2.6 -5 l2.6 5 z" fill="#ff6464"/>
<text x="709" y="41.5" font-size="12" fill="#00e64c">,MA6=1024.339</text>
<path d="M800.5 43.2 v-13" stroke="#ff6464" stroke-width="1.2" fill="none"/><path d="M797.9 34.0 l2.6 -5 l2.6 5 z" fill="#ff6464"/>
<rect x="64.5" y="551" width="152" height="14" fill="#16161a" stroke="#e88c20" stroke-width="1"/>
<text x="68" y="563" font-size="12" fill="#f09028">1牛势突破+筹码突破[自编]</text>
<path d="M207.5 556.5 h6 l-3 3.5 z" fill="#f09028"/>
<text x="221" y="563" font-size="12" fill="#e8e8f0">AA=1</text>
<path d="M255.5 564.7 v-13" stroke="#ff6464" stroke-width="1.2" fill="none"/><path d="M252.9 555.5 l2.6 -5 l2.6 5 z" fill="#ff6464"/>
<path d="M969 554 l7 7 M976 554 l-7 7" stroke="#c8c8c8" stroke-width="1.8"/>
<text x="11" y="738" font-size="12" fill="#e0e0e0">日线</text>
<path d="M40 728 h3 v4.3 h3.3 l-4.8 5.7 l-4.8 -5.7 h3.3 z" fill="#f4f4f4"/>
<text x="70.5" y="737.5" font-size="12" fill="#f0f0f8">2019/4</text>
<rect x="111.5" y="725.5" width="104" height="15" fill="#2a3a68" stroke="#a00000" stroke-width="1"/>
<text x="125" y="737.5" font-size="12" fill="#f0f040">2019/04/30,二</text>
<text x="418" y="737.5" font-size="12" fill="#f0f0f8">6</text>
<text x="644" y="737.5" font-size="12" fill="#f0f0f8">7</text>
<text x="917" y="737.5" font-size="12" fill="#f0f0f8">8</text>
<rect x="9" y="741" width="1381" height="2" fill="#1d1d1d"/><rect x="443" y="742" width="32" height="1" fill="#8a5a20"/><rect x="980" y="741" width="1" height="2" fill="#c00000"/><rect x="987" y="741" width="1" height="2" fill="#c00000"/><rect x="0" y="740" width="2" height="3" fill="#b0b0b0"/>
</svg>
<div id="rp">
<i class="l" style="left:987px;top:7px;width:403px;height:1px"></i>
<i class="l" style="left:987px;top:7px;width:1px;height:736px"></i>
<i class="l" style="left:987px;top:35px;width:403px;height:1px"></i>
<i class="l" style="left:987px;top:53px;width:403px;height:1px"></i>
<i class="l" style="left:987px;top:179px;width:403px;height:1px"></i>
<i class="l" style="left:987px;top:234px;width:403px;height:1px"></i>
<i class="l" style="left:987px;top:345px;width:403px;height:1px"></i>
<i class="l" style="left:987px;top:364px;width:403px;height:1px"></i>
<i class="l" style="left:987px;top:381px;width:403px;height:1px"></i>
<i class="l" style="left:1193px;top:180px;width:1px;height:54px"></i>
<div class="ttl" style="top:8px;left:982px"><span style="color:#f0f040;font-size:20px;font-family:'Liberation Sans',sans-serif">黄金</span><span style="color:#00e0e8;margin-left:8px">BK2094</span></div>
<svg style="position:absolute;left:990px;top:16px" width="12" height="14"><path d="M9.5 1.5 L3 7 L9.5 12.5" stroke="#808080" stroke-width="2.6" fill="none"/></svg>
<svg style="position:absolute;left:1376px;top:16px" width="12" height="14"><path d="M2.5 1.5 L9 7 L2.5 12.5" stroke="#808080" stroke-width="2.6" fill="none"/></svg>
<div class="r" style="top:36px">
<span class="k" style="left:992px">委比</span>
<span class="v" style="right:205px;color:#00f448">-29.64%</span>
<span class="k" style="left:1194px"></span>
<span class="v" style="right:5px;color:#00f448">63.68<span class="cj">万</span></span>
</div>
<div class="r" style="top:54px">
<span class="k" style="left:992px">最新</span>
<span class="v" style="right:205px;color:#ff5858">1283.90</span>
<span class="k" style="left:1194px">昨收</span>
<span class="v" style="right:5px;color:#f4f4f4">1188.13</span>
</div>
<div class="r" style="top:72px">
<span class="k" style="left:992px">涨跌</span>
<span class="v" style="right:205px;color:#ff5858"><span class="tu" style="border-left-width:4.3px;border-right-width:4.3px;border-bottom-width:7.5px;margin-right:0"></span>95.76</span>
<span class="k" style="left:1194px">开盘</span>
<span class="v" style="right:5px;color:#ff5858">1200.65</span>
</div>
<div class="r" style="top:90px">
<span class="k" style="left:992px">涨幅</span>
<span class="v" style="right:205px;color:#ff5858">+8.06%</span>
<span class="k" style="left:1194px">最高</span>
<span class="v" style="right:5px;color:#ff5858">1286.22</span>
</div>
<div class="r" style="top:108px">
<span class="k" style="left:992px">震幅</span>
<span class="v" style="right:205px;color:#ffff40">7.20%</span>
<span class="k" style="left:1194px">最低</span>
<span class="v" style="right:5px;color:#ff5858">1200.65</span>
</div>
<div class="r" style="top:126px">
<span class="k" style="left:992px">现手</span>
<span class="v" style="right:205px;color:#ffff40">18425<span style="display:inline-block;width:11px"></span></span>
<span class="k" style="left:1194px">量比</span>
<span class="v" style="right:5px;color:#ffff40">2.42</span>
</div>
<div class="r" style="top:144px">
<span class="k" style="left:992px">总手</span>
<span class="v" style="right:205px;color:#08e8ff">1124<span class="cj">万</span></span>
<span class="k" style="left:1194px">金额</span>
<span class="v" style="right:5px;color:#ffff40">95.21<span class="cj">亿</span></span>
</div>
<div class="r" style="top:162px">
<span class="k" style="left:992px">内盘</span>
<span class="v" style="right:205px;color:#00f448">4128587</span>
<span class="k" style="left:1194px">外盘</span>
<span class="v" style="right:5px;color:#ff5858">7113769</span>
</div>
<div class="r" style="top:180px">
<span class="k" style="left:992px">委卖</span>
<span class="v" style="right:205px;color:#f4f4f4"><span class="ds"></span></span>
<span class="k" style="left:1194px">上涨家数</span>
<span class="v" style="right:5px;color:#ff5858">11</span>
</div>
<div class="r" style="top:198px">
<span class="k" style="left:992px">委买</span>
<span class="v" style="right:205px;color:#f4f4f4"><span class="ds"></span></span>
<span class="k" style="left:1194px">平盘家数</span>
<span class="v" style="right:5px;color:#f4f4f4">0</span>
</div>
<div class="r" style="top:216px">
<span class="k" style="left:992px">换手</span>
<span class="v" style="right:205px;color:#ffff40">3.83%</span>
<span class="k" style="left:1194px">下跌家数</span>
<span class="v" style="right:5px;color:#00f448">1</span>
</div>
<div class="r" style="top:236px">
<span class="k" style="left:990px">算术平均股价</span>
<span class="v" style="right:2.5px;color:#ffff40">11.03</span>
</div>
<div class="r" style="top:254px">
<span class="k" style="left:990px">加权平均股价</span>
<span class="v" style="right:2.5px;color:#ffff40">7.47</span>
</div>
<div class="r" style="top:272px">
<span class="k" style="left:990px">加权平均市盈率</span>
<span class="v" style="right:2.5px;color:#ffff40">44.11</span>
</div>
<div class="r" style="top:290px">
<span class="k" style="left:990px">加权平均市净率</span>
<span class="v" style="right:2.5px;color:#ffff40">2.85</span>
</div>
<div class="r" style="top:308px">
<span class="k" style="left:990px">总市值</span>
<span class="v" style="right:2.5px;color:#ffff40">2778.60<span class="cj">亿</span></span>
</div>
<div class="r" style="top:326px">
<span class="k" style="left:990px">流通市值</span>
<span class="v" style="right:2.5px;color:#ffff40">2191.87<span class="cj">亿</span></span>
</div>
<div class="hd" style="top:346px;height:18px"></div>
<div class="hd" style="top:365px;height:16px;background:#1c1c1c"></div>
<span class="ht" style="left:1128px;top:347px">分时成交</span>
<i class="l" style="left:1317px;top:346px;width:1px;height:18px"></i>
<i class="l" style="left:1335px;top:346px;width:1px;height:18px"></i>
<i class="l" style="left:1353px;top:346px;width:1px;height:18px"></i>
<svg style="position:absolute;left:1323px;top:349px" width="8" height="12"><path d="M1 0.5 L7 6 L1 11.5 z" fill="#fff"/></svg>
<span class="ht" style="left:1338px;top:347px">细</span>
<span class="ht" style="left:1359.5px;top:347px">导出</span>
<i class="l" style="left:1020px;top:365px;width:1px;height:16px"></i>
<i class="l" style="left:1151px;top:365px;width:1px;height:16px"></i>
<i class="l" style="left:1277px;top:365px;width:1px;height:16px"></i>
<span class="ht" style="left:991px;top:365px">时间</span>
<span class="ht" style="left:1066px;top:365px">成交价</span>
<span class="ht" style="left:1201px;top:365px">手数</span>
<span class="ht" style="left:1315px;top:365px">笔数</span>
<div style="position:absolute;left:989px;top:707px;width:390px;height:17px;background:#2a3a62"></div>
<div class="r" style="top:382px">
<span class="v" style="right:369px;color:#f0f0f0">14:55</span>
<span class="v" style="right:249px;color:#ff5858">1283.40</span>
<span class="tu" style="position:absolute;left:1142.5px;top:5px"></span>
<span class="v" style="right:123px;color:#ffff40">5930</span>
<span class="v" style="right:14px;color:#d0d0d0">309</span>
</div>
<div class="r" style="top:400px">
<span class="v" style="right:369px;color:#f0f0f0">:43</span>
<span class="v" style="right:249px;color:#ff5858">1283.45</span>
<span class="tu" style="position:absolute;left:1142.5px;top:5px"></span>
<span class="v" style="right:123px;color:#ffff40">11588</span>
<span class="v" style="right:14px;color:#d0d0d0">405</span>
</div>
<div class="r" style="top:418px">
<span class="v" style="right:369px;color:#f0f0f0">:48</span>
<span class="v" style="right:249px;color:#ff5858">1283.45</span>
<span class="v" style="right:123px;color:#ffff40">19150</span>
<span class="v" style="right:14px;color:#d0d0d0">677</span>
</div>
<div class="r" style="top:436px">
<span class="v" style="right:369px;color:#f0f0f0">:53</span>
<span class="v" style="right:249px;color:#ff5858">1282.14</span>
<span class="td" style="position:absolute;left:1142.5px;top:5.5px"></span>
<span class="v" style="right:123px;color:#ffff40">9403</span>
<span class="v" style="right:14px;color:#d0d0d0">472</span>
</div>
<div class="r" style="top:454px">
<span class="v" style="right:369px;color:#f0f0f0">:58</span>
<span class="v" style="right:249px;color:#ff5858">1282.52</span>
<span class="tu" style="position:absolute;left:1142.5px;top:5px"></span>
<span class="v" style="right:123px;color:#ffff40">4503</span>
<span class="v" style="right:14px;color:#d0d0d0">220</span>
</div>
<div class="r" style="top:472px">
<span class="v" style="right:369px;color:#f0f0f0">14:56</span>
<span class="v" style="right:249px;color:#ff5858">1282.30</span>
<span class="td" style="position:absolute;left:1142.5px;top:5.5px"></span>
<span class="v" style="right:123px;color:#ffff40">8694</span>
<span class="v" style="right:14px;color:#d0d0d0">464</span>
</div>
<div class="r" style="top:490px">
<span class="v" style="right:369px;color:#f0f0f0">:13</span>
<span class="v" style="right:249px;color:#ff5858">1283.66</span>
<span class="tu" style="position:absolute;left:1142.5px;top:5px"></span>
<span class="v" style="right:123px;color:#ffff40">24718</span>
<span class="v" style="right:14px;color:#d0d0d0">837</span>
</div>
<div class="r" style="top:508px">
<span class="v" style="right:369px;color:#f0f0f0">:18</span>
<span class="v" style="right:249px;color:#ff5858">1282.65</span>
<span class="td" style="position:absolute;left:1142.5px;top:5.5px"></span>
<span class="v" style="right:123px;color:#ffff40">8072</span>
<span class="v" style="right:14px;color:#d0d0d0">372</span>
</div>
<div class="r" style="top:526px">
<span class="v" style="right:369px;color:#f0f0f0">:23</span>
<span class="v" style="right:249px;color:#ff5858">1283.67</span>
<span class="tu" style="position:absolute;left:1142.5px;top:5px"></span>
<span class="v" style="right:123px;color:#ffff40">14529</span>
<span class="v" style="right:14px;color:#d0d0d0">696</span>
</div>
<div class="r" style="top:544px">
<span class="v" style="right:369px;color:#f0f0f0">:28</span>
<span class="v" style="right:249px;color:#ff5858">1283.47</span>
<span class="td" style="position:absolute;left:1142.5px;top:5.5px"></span>
<span class="v" style="right:123px;color:#ffff40">20761</span>
<span class="v" style="right:14px;color:#d0d0d0">898</span>
</div>
<div class="r" style="top:562px">
<span class="v" style="right:369px;color:#f0f0f0">:33</span>
<span class="v" style="right:249px;color:#ff5858">1283.70</span>
<span class="tu" style="position:absolute;left:1142.5px;top:5px"></span>
<span class="v" style="right:123px;color:#ffff40">11307</span>
<span class="v" style="right:14px;color:#d0d0d0">632</span>
</div>
<div class="r" style="top:580px">
<span class="v" style="right:369px;color:#f0f0f0">:38</span>
<span class="v" style="right:249px;color:#ff5858">1283.68</span>
<span class="td" style="position:absolute;left:1142.5px;top:5.5px"></span>
<span class="v" style="right:123px;color:#ffff40">9627</span>
<span class="v" style="right:14px;color:#d0d0d0">525</span>
</div>
<div class="r" style="top:598px">
<span class="v" style="right:369px;color:#f0f0f0">:43</span>
<span class="v" style="right:249px;color:#ff5858">1282.42</span>
<span class="td" style="position:absolute;left:1142.5px;top:5.5px"></span>
<span class="v" style="right:123px;color:#ffff40">13891</span>
<span class="v" style="right:14px;color:#d0d0d0">662</span>
</div>
<div class="r" style="top:616px">
<span class="v" style="right:369px;color:#f0f0f0">:48</span>
<span class="v" style="right:249px;color:#ff5858">1282.65</span>
<span class="tu" style="position:absolute;left:1142.5px;top:5px"></span>
<span class="v" style="right:123px;color:#ffff40">10524</span>
<span class="v" style="right:14px;color:#d0d0d0">575</span>
</div>
<div class="r" style="top:634px">
<span class="v" style="right:369px;color:#f0f0f0">:53</span>
<span class="v" style="right:249px;color:#ff5858">1282.65</span>
<span class="tu" style="position:absolute;left:1142.5px;top:5px"></span>
<span class="v" style="right:123px;color:#ffff40">17520</span>
<span class="v" style="right:14px;color:#d0d0d0">794</span>
</div>
<div class="r" style="top:652px">
<span class="v" style="right:369px;color:#f0f0f0">:58</span>
<span class="v" style="right:249px;color:#ff5858">1283.71</span>
<span class="tu" style="position:absolute;left:1142.5px;top:5px"></span>
<span class="v" style="right:123px;color:#ffff40">6702</span>
<span class="v" style="right:14px;color:#d0d0d0">269</span>
</div>
<div class="r" style="top:670px">
<span class="v" style="right:369px;color:#f0f0f0">14:57</span>
<span class="v" style="right:249px;color:#ff5858">1282.86</span>
<span class="td" style="position:absolute;left:1142.5px;top:5.5px"></span>
<span class="v" style="right:123px;color:#ffff40">4679</span>
<span class="v" style="right:14px;color:#d0d0d0">245</span>
</div>
<div class="r" style="top:688px">
<span class="v" style="right:369px;color:#f0f0f0">14:59</span>
<span class="v" style="right:249px;color:#ff5858">1283.90</span>
<span class="tu" style="position:absolute;left:1142.5px;top:5px"></span>
<span class="v" style="right:123px;color:#ffff40">158421</span>
<span class="v" style="right:14px;color:#d0d0d0">5896</span>
</div>
<div class="r" style="top:706px">
<span class="v" style="right:369px;color:#f0f0f0">15:00</span>
<span class="v" style="right:249px;color:#ff5858">1283.90</span>
<span class="v" style="right:123px;color:#ffff40">18425</span>
<span class="v" style="right:14px;color:#d0d0d0">795</span>
</div>
<i style="position:absolute;left:988px;top:472px;width:391px;height:1px;background:repeating-linear-gradient(90deg,#900000 0 1px,transparent 1px 3px)"></i>
<i style="position:absolute;left:988px;top:670px;width:391px;height:1px;background:repeating-linear-gradient(90deg,#900000 0 1px,transparent 1px 3px)"></i>
<i style="position:absolute;left:988px;top:688px;width:391px;height:1px;background:repeating-linear-gradient(90deg,#900000 0 1px,transparent 1px 3px)"></i>
<i style="position:absolute;left:988px;top:706px;width:391px;height:1px;background:repeating-linear-gradient(90deg,#900000 0 1px,transparent 1px 3px)"></i>
<div style="position:absolute;left:1379px;top:382px;width:11px;height:361px;background:#262626"></div>
<div style="position:absolute;left:1382px;top:721px;width:7px;height:19px;border-radius:3.5px;background:#8a8a8a"></div>
<div style="position:absolute;left:988px;top:741px;width:34px;height:2px;background:#a88048"></div>
</div>
</body></html>
